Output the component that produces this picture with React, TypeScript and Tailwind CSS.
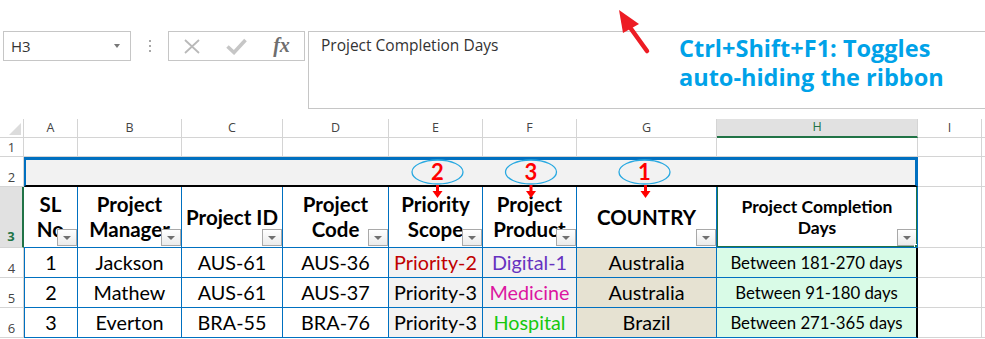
import React from "react";

function DropBtn() {
  return (
    <div className="absolute right-0 bottom-px w-[20px] h-[17px] border border-[#a9a9a9] bg-linear-to-b from-white to-[#ebebeb] flex items-center justify-center">
      <div className="w-0 h-0 border-l-[4px] border-r-[4px] border-t-[4px] border-l-transparent border-r-transparent border-t-[#6f6f6f]" />
    </div>
  );
}

const rowHdr =
  "flex items-end justify-center pb-[2px] border-r border-b border-[#d4d4d4] text-[13px] leading-none text-[#444] [font-family:'Open_Sans',sans-serif]";
const grayCell = "border-r border-b border-[#d4d4d4]";
const fillCell = "border-b border-[#d4d4d4]";

type Hdr = { lines: string[]; small?: boolean };
const headers: Hdr[] = [
  { lines: ["SL", "No"] },
  { lines: ["Project", "Manager"] },
  { lines: ["Project ID"] },
  { lines: ["Project", "Code"] },
  { lines: ["Priority", "Scope"] },
  { lines: ["Project", "Product"] },
  { lines: ["COUNTRY"] },
  { lines: ["Project Completion", "Days"], small: true },
];

type Row = { n: string; cells: string[]; eColor: string; fColor: string };
const rows: Row[] = [
  {
    n: "4",
    cells: ["1", "Jackson", "AUS-61", "AUS-36", "Priority-2", "Digital-1", "Australia", "Between 181-270 days"],
    eColor: "text-[#c00000]",
    fColor: "text-[#6632c0]",
  },
  {
    n: "5",
    cells: ["2", "Mathew", "AUS-61", "AUS-37", "Priority-3", "Medicine", "Australia", "Between 91-180 days"],
    eColor: "text-black",
    fColor: "text-[#dc16a0]",
  },
  {
    n: "6",
    cells: ["3", "Everton", "BRA-55", "BRA-76", "Priority-3", "Hospital", "Brazil", "Between 271-365 days"],
    eColor: "text-black",
    fColor: "text-[#16c80e]",
  },
];

export default function App() {
  const letters = ["A", "B", "C", "D", "E", "F", "G", "H", "I"];
  return (
    <div className="relative w-[985px] h-[339px] overflow-hidden bg-white text-black [font-family:Lato,sans-serif]">
      <div className="h-[31px]" />
      {/* formula bar */}
      <div className="flex h-[78px] items-start">
        <div className="ml-[3px] w-[128px] h-[30px] border border-[#c6c6c6] flex items-center justify-between pl-[7px] pr-[10px]">
          <span className="text-[15px] text-[#333] [font-family:'Open_Sans',sans-serif]">H3</span>
          <div className="w-0 h-0 border-l-[3.5px] border-r-[3.5px] border-t-[4px] border-l-transparent border-r-transparent border-t-[#777]" />
        </div>
        <div className="w-[37px] h-[30px] flex flex-col items-center justify-center gap-[3px]">
          <div className="w-[2px] h-[2px] bg-[#a8a8a8]" />
          <div className="w-[2px] h-[2px] bg-[#a8a8a8]" />
          <div className="w-[2px] h-[2px] bg-[#a8a8a8]" />
        </div>
        <div className="w-[137px] h-[30px] border border-[#c6c6c6] flex items-center">
          <div className="w-[45px] flex justify-center">
            <svg width="18" height="15" viewBox="0 0 18 15">
              <path d="M2 1 L16 14 M16 1 L2 14" stroke="#b9b9b9" strokeWidth="1.8" fill="none" />
            </svg>
          </div>
          <div className="w-[45px] flex justify-center">
            <svg width="21" height="17" viewBox="0 0 21 17">
              <path d="M1.5 8.5 L8 14.5 L19.5 2" stroke="#c6c6c6" strokeWidth="3.6" fill="none" />
            </svg>
          </div>
          <div className="w-[45px] flex justify-center">
            <span className="[font-family:'Liberation_Serif',serif] italic font-bold text-[20px] leading-none text-[#6e6e6e] -mt-[2px]">
              fx
            </span>
          </div>
        </div>
        <div className="ml-[3px] flex-1 h-[78px] border-y border-l border-[#c6c6c6] pl-[12px] pt-[3px] text-[15.5px] leading-[20px] text-[#333] [font-family:'Open_Sans',sans-serif]">
          Project Completion Days
        </div>
      </div>
      <div className="h-[10px]" />

      {/* sheet */}
      <div className="grid grid-cols-[24px_54px_104px_101px_106px_94px_94px_140px_201px_64px_1fr] grid-rows-[19px_19px_30px_61px_30px_30px_30px]">
        {/* column header row */}
        <div className="border-r border-b border-[#d4d4d4] relative">
          <svg className="absolute left-0 top-0" width="24" height="19" viewBox="0 0 24 19">
            <polygon points="21,4 21,16 9,16" fill="#dcdcdc" />
          </svg>
        </div>
        {letters.map((l) =>
          l === "H" ? (
            <div
              key={l}
              className="flex items-center justify-center bg-[#e1e1e1] border-r border-r-[#d4d4d4] border-b-2 border-b-[#217346] text-[12.5px] leading-none text-[#217346] [font-family:'Open_Sans',sans-serif]"
            >
              {l}
            </div>
          ) : (
            <div
              key={l}
              className="flex items-center justify-center border-r border-b border-[#d4d4d4] text-[12.5px] leading-none text-[#444] [font-family:'Open_Sans',sans-serif]"
            >
              {l}
            </div>
          )
        )}
        <div className={fillCell} />

        {/* row 1 */}
        <div className={rowHdr}>1</div>
        {letters.map((l) => (
          <div key={"r1" + l} className={grayCell} />
        ))}
        <div className={fillCell} />

        {/* row 2 */}
        <div className={rowHdr}>2</div>
        <div className="col-span-8 bg-[#f2f2f2] border-t-[3px] border-l-2 border-r-[3px] border-[#0070c0] border-b-2 border-b-black" />
        <div className={grayCell} />
        <div className={fillCell} />

        {/* row 3 */}
        <div className="flex items-end justify-center pb-[4px] bg-[#e1e1e1] border-r-2 border-r-[#217346] border-b border-b-[#d4d4d4] text-[13px] leading-none font-bold text-[#217346] [font-family:'Open_Sans',sans-serif]">
          3
        </div>
        {headers.map((h, i) => (
          <div
            key={"h" + i}
            className="relative overflow-hidden bg-white border-r border-b border-[#0070c0] flex flex-col items-center justify-center font-bold whitespace-nowrap"
          >
            {h.lines.map((ln) => (
              <div
                key={ln}
                className={h.small ? "text-[17.5px] leading-[21px]" : "text-[20.5px] leading-[25px]"}
              >
                {ln}
              </div>
            ))}
            <DropBtn />
            {i === 7 && (
              <div className="absolute -left-px -right-px -top-[2px] -bottom-px border-2 border-[#217346]">
                <div className="absolute -right-[4px] -bottom-[4px] w-[6px] h-[6px] bg-[#217346] border border-white" />
              </div>
            )}
          </div>
        ))}
        <div className={grayCell} />
        <div className={fillCell} />

        {/* data rows */}
        {rows.map((r) => (
          <React.Fragment key={r.n}>
            <div className={rowHdr}>{r.n}</div>
            {r.cells.map((c, i) => {
              let cls =
                "flex items-center justify-center overflow-hidden whitespace-nowrap border-b border-b-[#0070c0] ";
              if (i === 0) cls += "border-l border-l-[#0070c0] ";
              if (i === 7) cls += "border-r-2 border-r-black bg-[#d9fbe7] text-[16.8px] ";
              else cls += "border-r border-r-[#0070c0] text-[19.8px] ";
              if (i === 4) cls += "bg-[#f2f2f2] " + r.eColor;
              if (i === 5) cls += "bg-[#f2f2f2] " + r.fColor;
              if (i === 6) cls += "bg-[#e6e2d2] ";
              return (
                <div key={i} className={cls}>
                  {c}
                </div>
              );
            })}
            <div className={grayCell} />
            <div className={fillCell} />
          </React.Fragment>
        ))}
      </div>

      {/* annotations */}
      <div className="absolute left-[679px] top-[34px] text-[23.5px] leading-[29px] font-bold text-[#00a2e8] whitespace-nowrap [font-family:'Open_Sans',sans-serif]">
        <div>Ctrl+Shift+F1: Toggles</div>
        <div>auto-hiding the ribbon</div>
      </div>

      <svg className="absolute left-0 top-0 pointer-events-none" width="985" height="339" viewBox="0 0 985 339">
        <line x1="647" y1="51" x2="629" y2="26" stroke="#ed1c24" strokeWidth="4.5" strokeLinecap="round" />
        <polygon points="619,10 623,33 639,24" fill="#ed1c24" />

        <ellipse cx="437.5" cy="172" rx="25.5" ry="12" fill="none" stroke="#29a9e1" strokeWidth="1.3" />
        <ellipse cx="531" cy="172" rx="25.5" ry="12" fill="none" stroke="#29a9e1" strokeWidth="1.3" />
        <ellipse cx="644.5" cy="172" rx="25.5" ry="12" fill="none" stroke="#29a9e1" strokeWidth="1.3" />

        <rect x="436" y="185" width="3" height="7" fill="#ff0000" />
        <polygon points="432.5,191 442.5,191 437.5,198" fill="#ff0000" />
        <rect x="529.5" y="185" width="3" height="7" fill="#ff0000" />
        <polygon points="526,191 536,191 531,198" fill="#ff0000" />
        <rect x="644" y="185" width="3" height="7" fill="#ff0000" />
        <polygon points="640.5,191 650.5,191 645.5,198" fill="#ff0000" />
      </svg>

      {[
        { x: 412, t: "2" },
        { x: 505.5, t: "3" },
        { x: 619, t: "1" },
      ].map((n) => (
        <div
          key={n.t}
          className="absolute top-[160px] w-[51px] h-[24px] flex items-center justify-center text-[22px] leading-none font-bold text-[#ff0000]"
          style={{ left: n.x }}
        >
          {n.t}
        </div>
      ))}
    </div>
  );
}
